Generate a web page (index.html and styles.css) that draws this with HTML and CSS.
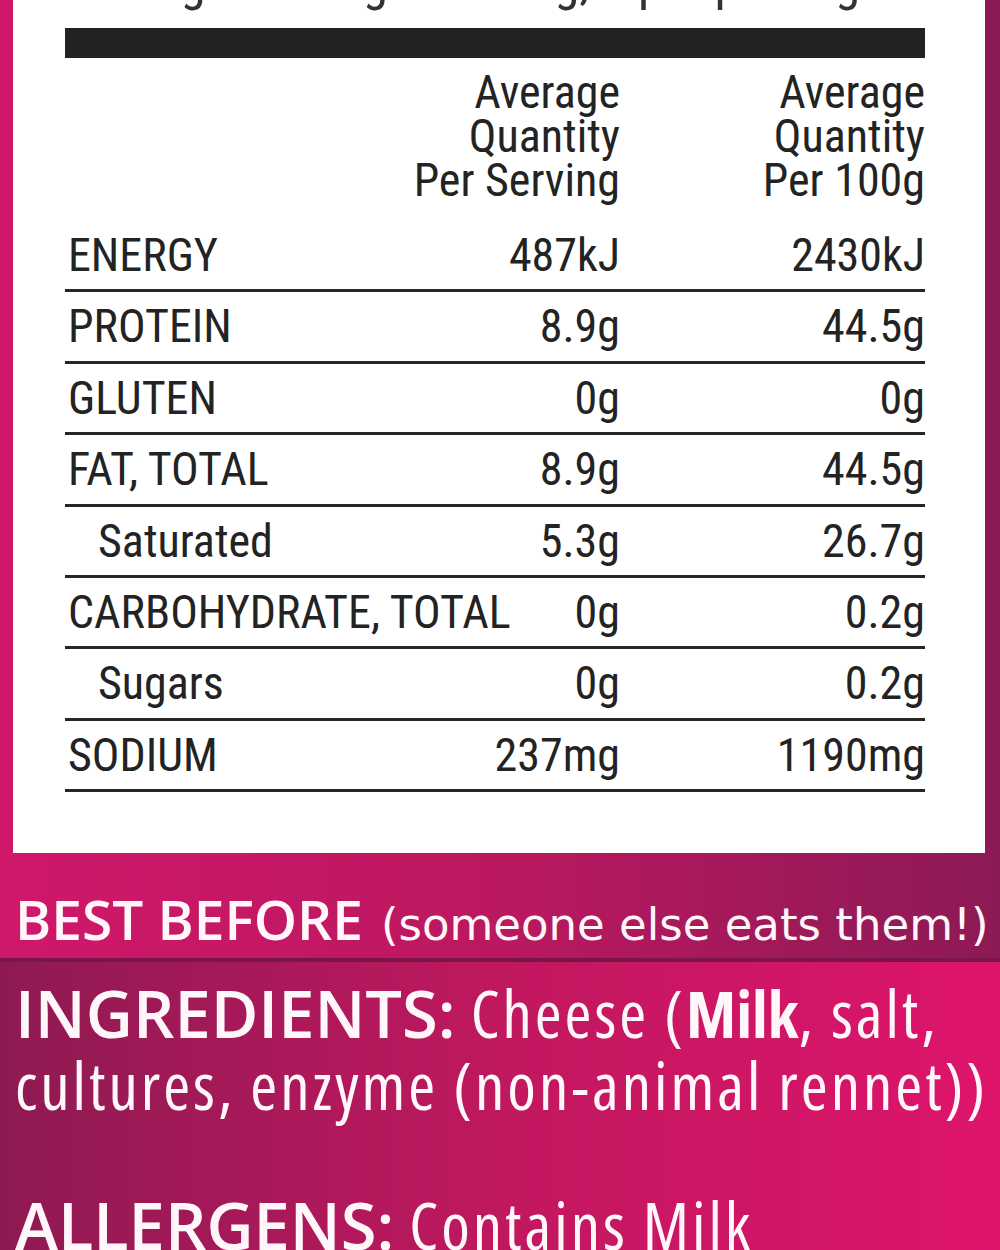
FILE: index.html
```html
<!DOCTYPE html>
<html lang="en">
<head>
<meta charset="utf-8">
<title>Nutrition Information</title>
<link rel="stylesheet" href="styles.css">
</head>
<body>
<div class="top">
  <div class="card">
    <div class="serving">Average serving size: 20g, 5 per package</div>
    <div class="bar"></div>
    <div class="head">
      <div class="hcol hcol1">Average<br>Quantity<br>Per Serving</div>
      <div class="hcol hcol2">Average<br>Quantity<br>Per 100g</div>
    </div>
    <div class="rows">
      <div class="row"><span class="label">ENERGY</span><span class="val">487kJ</span><span class="val">2430kJ</span></div>
      <div class="row"><span class="label">PROTEIN</span><span class="val">8.9g</span><span class="val">44.5g</span></div>
      <div class="row"><span class="label">GLUTEN</span><span class="val">0g</span><span class="val">0g</span></div>
      <div class="row"><span class="label">FAT, TOTAL</span><span class="val">8.9g</span><span class="val">44.5g</span></div>
      <div class="row"><span class="label sub">Saturated</span><span class="val">5.3g</span><span class="val">26.7g</span></div>
      <div class="row"><span class="label">CARBOHYDRATE, TOTAL</span><span class="val">0g</span><span class="val">0.2g</span></div>
      <div class="row"><span class="label sub">Sugars</span><span class="val">0g</span><span class="val">0.2g</span></div>
      <div class="row"><span class="label">SODIUM</span><span class="val">237mg</span><span class="val">1190mg</span></div>
    </div>
  </div>
  <div class="best"><span class="best-title">BEST BEFORE</span> <span class="best-note">(someone else eats them!)</span></div>
</div>
<div class="divider"></div>
<div class="ingredients">
  <p class="para"><span class="heading">INGREDIENTS:</span> Cheese (<b>Milk</b>, salt,<br>cultures, enzyme (non-animal rennet))</p>
  <p class="para"><span class="heading">ALLERGENS:</span> Contains Milk</p>
</div>
</body>
</html>
```
FILE: styles.css
```css
* { box-sizing: border-box; }

html, body {
  margin: 0;
  padding: 0;
}

body {
  width: 1000px;
  height: 1250px;
  overflow: hidden;
  background: #b3185d;
}

.top {
  background: linear-gradient(to right, #cf186a 0%, #bb185f 50%, #8c1a55 100%);
  padding: 0 15px 0 13px;
}

.card {
  background: #ffffff;
  height: 853px;
  padding: 0 60px 0 52px;
  overflow: hidden;
  font-family: "Roboto Condensed", "Roboto", sans-serif;
  font-size: 46px;
  color: #232323;
}

.serving {
  font-size: 51px;
  line-height: 46px;
  margin-top: -41px;
  padding-left: 3px;
  white-space: nowrap;
  color: #333;
}

.bar {
  margin-top: 23px;
  height: 30px;
  background: #222222;
}

.head {
  margin-top: 12px;
  display: flex;
  justify-content: flex-end;
  line-height: 44px;
}

.hcol {
  text-align: right;
}

.hcol2 {
  width: 305px;
}

.rows {
  margin-top: 19px;
}

.row {
  display: grid;
  grid-template-columns: minmax(0, 1fr) 200px 305px;
  height: 71.4px;
  line-height: 68.4px;
  border-bottom: 3px solid #262626;
}

.label {
  white-space: nowrap;
  padding-left: 3px;
}

.label.sub {
  padding-left: 33px;
}

.val {
  text-align: right;
  white-space: nowrap;
}

.best {
  height: 105px;
  padding: 36px 0 0 2px;
  line-height: 60px;
  color: #fff6fa;
  white-space: nowrap;
}

.best-title {
  font-family: "Open Sans", sans-serif;
  font-weight: 600;
  font-size: 55px;
}

.best-note {
  margin-left: 14px;
  font-family: "DejaVu Sans", sans-serif;
  font-size: 45px;
}

.divider {
  height: 4px;
  background: #7a1548;
}

.ingredients {
  height: 288px;
  background: linear-gradient(to right, #8e1a52 0%, #c0185f 50%, #de146b 100%);
  padding: 15px 0 0 15px;
  color: #fff6fa;
  font-family: "Open Sans", sans-serif;
  font-stretch: 87.5%;
  font-size: 65px;
  line-height: 72px;
  letter-spacing: 3px;
}

.para {
  margin: 0 0 68px 0;
  white-space: nowrap;
}

.heading {
  font-weight: 600;
  font-stretch: 100%;
  letter-spacing: 0;
}

.para b {
  font-weight: 700;
  letter-spacing: 0;
}
```
